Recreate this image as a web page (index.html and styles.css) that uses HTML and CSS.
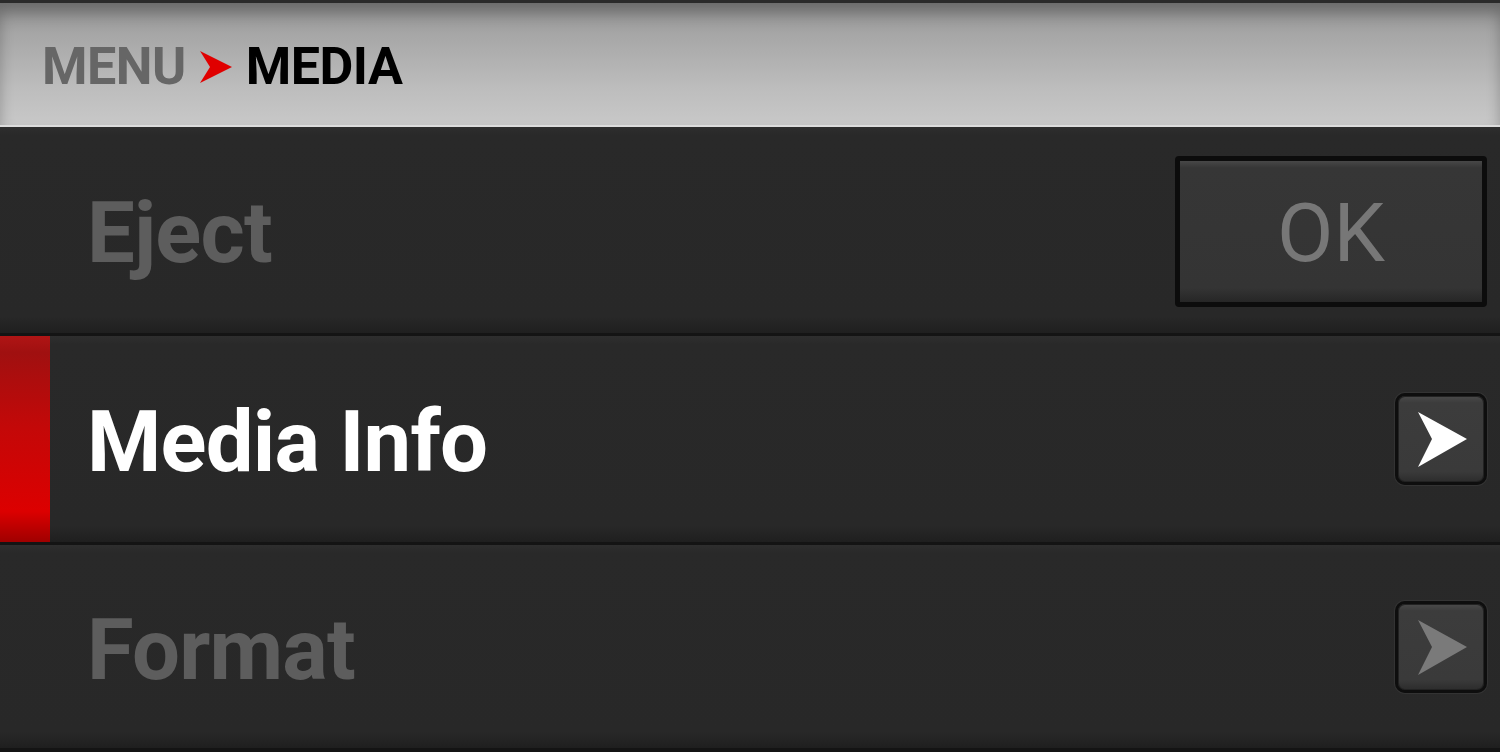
FILE: index.html
```html
<!DOCTYPE html>
<html lang="en">
<head>
    <meta charset="UTF-8">
    <title>Menu - Media</title>
    <link rel="stylesheet" href="styles.css">
</head>
<body>
    <header class="title-bar">
        <span class="crumb">MENU</span>
        <svg class="crumb-arrow" width="34" height="34" viewBox="0 0 34 34">
            <path d="M1 1 L33 17 L1 33 L11 17 Z" fill="#e00000"/>
        </svg>
        <span class="crumb current">MEDIA</span>
    </header>

    <div class="menu">
        <div class="menu-row disabled">
            <span class="label">Eject</span>
            <button class="ok-btn">OK</button>
        </div>
        <div class="menu-row selected">
            <div class="marker"></div>
            <span class="label">Media Info</span>
            <button class="arrow-btn">
                <svg width="56" height="60" viewBox="0 0 56 60">
                    <path d="M3 3 L52 30 L3 58 L17 30 Z" fill="#ffffff"/>
                </svg>
            </button>
        </div>
        <div class="menu-row disabled">
            <span class="label">Format</span>
            <button class="arrow-btn">
                <svg width="56" height="60" viewBox="0 0 56 60">
                    <path d="M3 3 L52 30 L3 58 L17 30 Z" fill="#7a7a7a"/>
                </svg>
            </button>
        </div>
    </div>
</body>
</html>
```

FILE: styles.css
```css
* {
    margin: 0;
    padding: 0;
    box-sizing: border-box;
    font-family: 'Roboto', sans-serif;
}

body {
    width: 1500px;
    height: 752px;
    overflow: hidden;
    background-color: #141414;
    border-top: 3px solid #2a2a2a;
}

.title-bar {
    height: 124px;
    display: flex;
    align-items: center;
    gap: 13px;
    padding: 4px 0 0 42px;
    background: linear-gradient(#8e8e8e 0%, #a6a6a6 25%, #bdbdbd 70%, #c8c8c8 100%);
    border-bottom: 2px solid #dcdcdc;
    box-shadow: inset 0 10px 14px rgba(0, 0, 0, 0.25);
}

.crumb {
    font-size: 52px;
    font-weight: bold;
    color: #666;
    letter-spacing: -0.5px;
}

.crumb.current {
    color: #000;
}

.crumb-arrow {
    margin-top: 2px;
}

.menu {
    display: flex;
    flex-direction: column;
    gap: 3px;
}

.menu-row {
    height: 206px;
    display: flex;
    align-items: center;
    justify-content: space-between;
    padding: 6px 13px 0 87px;
    background: linear-gradient(#2e2e2e 0%, #292929 4%, #282828 92%, #1f1f1f 100%);
    position: relative;
}

.menu-row:last-child {
    height: 203px;
}

.label {
    font-size: 85px;
    font-weight: bold;
    color: #5d5d5d;
    letter-spacing: -0.8px;
}

.selected .label {
    color: #fff;
}

.marker {
    position: absolute;
    left: 0;
    top: 0;
    bottom: 0;
    width: 50px;
    background: linear-gradient(#b01515 0%, #a01010 8%, #c40808 45%, #dc0000 85%, #a00000 100%);
}

.ok-btn {
    width: 312px;
    height: 151px;
    margin-top: -3px;
    border: 5px solid #0c0c0c;
    border-radius: 4px;
    background: linear-gradient(#474747 0%, #363636 5%, #343434 90%, #262626 100%);
    color: #777;
    font-size: 82px;
    font-weight: normal;
    padding-top: 2px;
}

.arrow-btn {
    width: 92px;
    height: 92px;
    margin-top: -6px;
    display: flex;
    align-items: center;
    justify-content: center;
    border: 3px solid #0e0e0e;
    border-radius: 10px;
    background: linear-gradient(#4a4a4a 0%, #3c3c3c 8%, #3a3a3a 88%, #2c2c2c 100%);
    box-shadow: 0 0 0 1px #333, inset 0 0 0 1px #222;
    padding-left: 4px;
}
```
